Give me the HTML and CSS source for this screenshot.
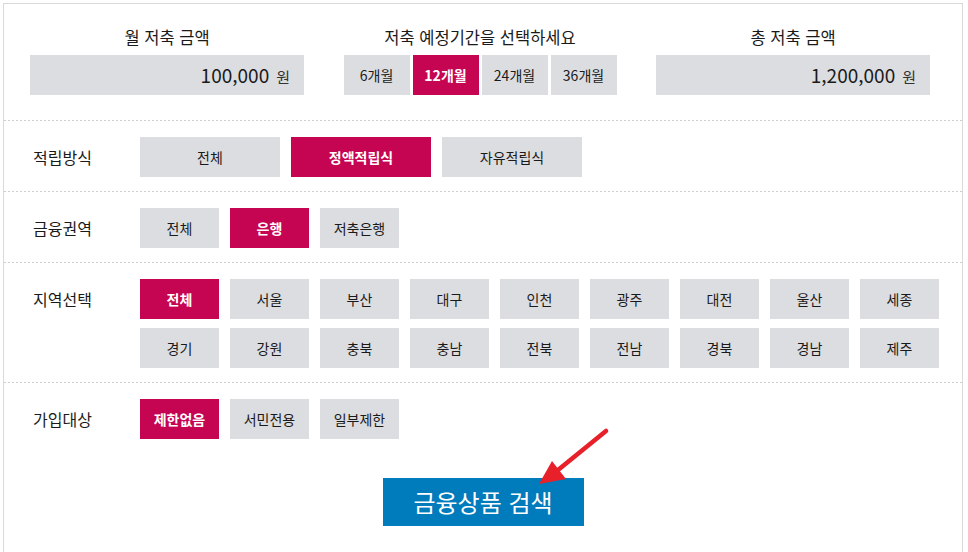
FILE: index.html
```html
<!DOCTYPE html>
<html lang="ko">
<head>
<meta charset="utf-8">
<link rel="stylesheet" href="styles.css">
</head>
<body>
<div class="wrap">
  <div class="top">
    <div class="col">
      <div class="col-title">월 저축 금액</div>
      <div class="amount"><span class="num">100,000</span><span class="unit">원</span></div>
    </div>
    <div class="col">
      <div class="col-title">저축 예정기간을 선택하세요</div>
      <div class="period">
        <button class="btn pbtn">6개월</button>
        <button class="btn pbtn on">12개월</button>
        <button class="btn pbtn">24개월</button>
        <button class="btn pbtn">36개월</button>
      </div>
    </div>
    <div class="col">
      <div class="col-title">총 저축 금액</div>
      <div class="amount"><span class="num">1,200,000</span><span class="unit">원</span></div>
    </div>
  </div>

  <div class="row">
    <div class="row-label">적립방식</div>
    <div class="opts">
      <button class="btn wide">전체</button>
      <button class="btn wide on">정액적립식</button>
      <button class="btn wide">자유적립식</button>
    </div>
  </div>

  <div class="row">
    <div class="row-label">금융권역</div>
    <div class="opts">
      <button class="btn">전체</button>
      <button class="btn on">은행</button>
      <button class="btn">저축은행</button>
    </div>
  </div>

  <div class="row">
    <div class="row-label">지역선택</div>
    <div class="opts">
      <button class="btn on">전체</button>
      <button class="btn">서울</button>
      <button class="btn">부산</button>
      <button class="btn">대구</button>
      <button class="btn">인천</button>
      <button class="btn">광주</button>
      <button class="btn">대전</button>
      <button class="btn">울산</button>
      <button class="btn">세종</button>
      <button class="btn">경기</button>
      <button class="btn">강원</button>
      <button class="btn">충북</button>
      <button class="btn">충남</button>
      <button class="btn">전북</button>
      <button class="btn">전남</button>
      <button class="btn">경북</button>
      <button class="btn">경남</button>
      <button class="btn">제주</button>
    </div>
  </div>

  <div class="row">
    <div class="row-label">가입대상</div>
    <div class="opts">
      <button class="btn on">제한없음</button>
      <button class="btn">서민전용</button>
      <button class="btn">일부제한</button>
    </div>
  </div>

  <div class="search-area">
    <button class="search">금융상품 검색</button>
  </div>

  <svg class="arrow" width="100" height="75" viewBox="0 0 100 75">
    <line x1="86" y1="11" x2="38" y2="50" stroke="#e8202a" stroke-width="4.5" stroke-linecap="round"/>
    <polygon points="19,64 32,41 46,59" fill="#e8202a"/>
  </svg>
</div>
</body>
</html>
```

FILE: styles.css
```css
* { box-sizing: border-box; }

html, body {
  margin: 0;
  padding: 0;
  background: #ffffff;
}

body {
  font-family: "Noto Sans CJK KR", "Malgun Gothic", sans-serif;
  color: #1a1a1a;
}

.wrap {
  position: relative;
  margin: 3px 0 0 3px;
  width: 960px;
  height: 560px;
  border: 1px solid #d9d9d7;
  border-bottom: none;
}

.top {
  display: grid;
  grid-template-columns: 274px 273px 274px;
  column-gap: 39.5px;
  padding: 21px 0 25px 26px;
}

.col-title {
  text-align: center;
  font-size: 16.5px;
  line-height: 24px;
  margin-bottom: 6px;
  color: #1a1a1a;
}

.amount {
  height: 40px;
  background: #dcdde1;
  text-align: right;
  padding-right: 14px;
  line-height: 40px;
  white-space: nowrap;
}

.num {
  font-size: 19px;
  color: #1a1a1a;
}

.unit {
  font-size: 15px;
  margin-left: 7px;
  color: #333;
}

.period {
  display: flex;
  gap: 3px;
}

.btn {
  width: 79px;
  height: 40px;
  border: none;
  margin: 0;
  padding: 0;
  background: #dcdde1;
  color: #1a1a1a;
  font-family: "Noto Sans CJK KR", "Malgun Gothic", sans-serif;
  font-size: 14px;
  line-height: 40px;
  cursor: pointer;
}

.btn.on {
  background: #c50452;
  color: #fff;
  font-weight: bold;
}

.pbtn {
  width: 66px;
}

.btn.wide {
  width: 140px;
}

.row {
  display: flex;
  align-items: flex-start;
  padding: 16px 0 14px 29px;
  background-image: repeating-linear-gradient(to right, #cfcfcf 0 2px, transparent 2px 4px);
  background-size: 100% 1px;
  background-repeat: no-repeat;
  background-position: 0 0;
  border-top: 1px solid transparent;
  background-origin: border-box;
}

.row-label {
  width: 107px;
  flex: none;
  font-size: 16px;
  line-height: 40px;
  color: #1a1a1a;
}

.opts {
  display: flex;
  flex-wrap: wrap;
  gap: 9px 11px;
  width: 800px;
}

.search-area {
  display: flex;
  justify-content: center;
  padding-top: 25px;
}

.search {
  width: 201px;
  height: 48px;
  border: none;
  background: #007bbb;
  color: #fff;
  font-family: "Noto Sans CJK KR", "Malgun Gothic", sans-serif;
  font-size: 24px;
  line-height: 48px;
  padding: 0;
  cursor: pointer;
}

.arrow {
  position: absolute;
  left: 516px;
  top: 416px;
}
```
